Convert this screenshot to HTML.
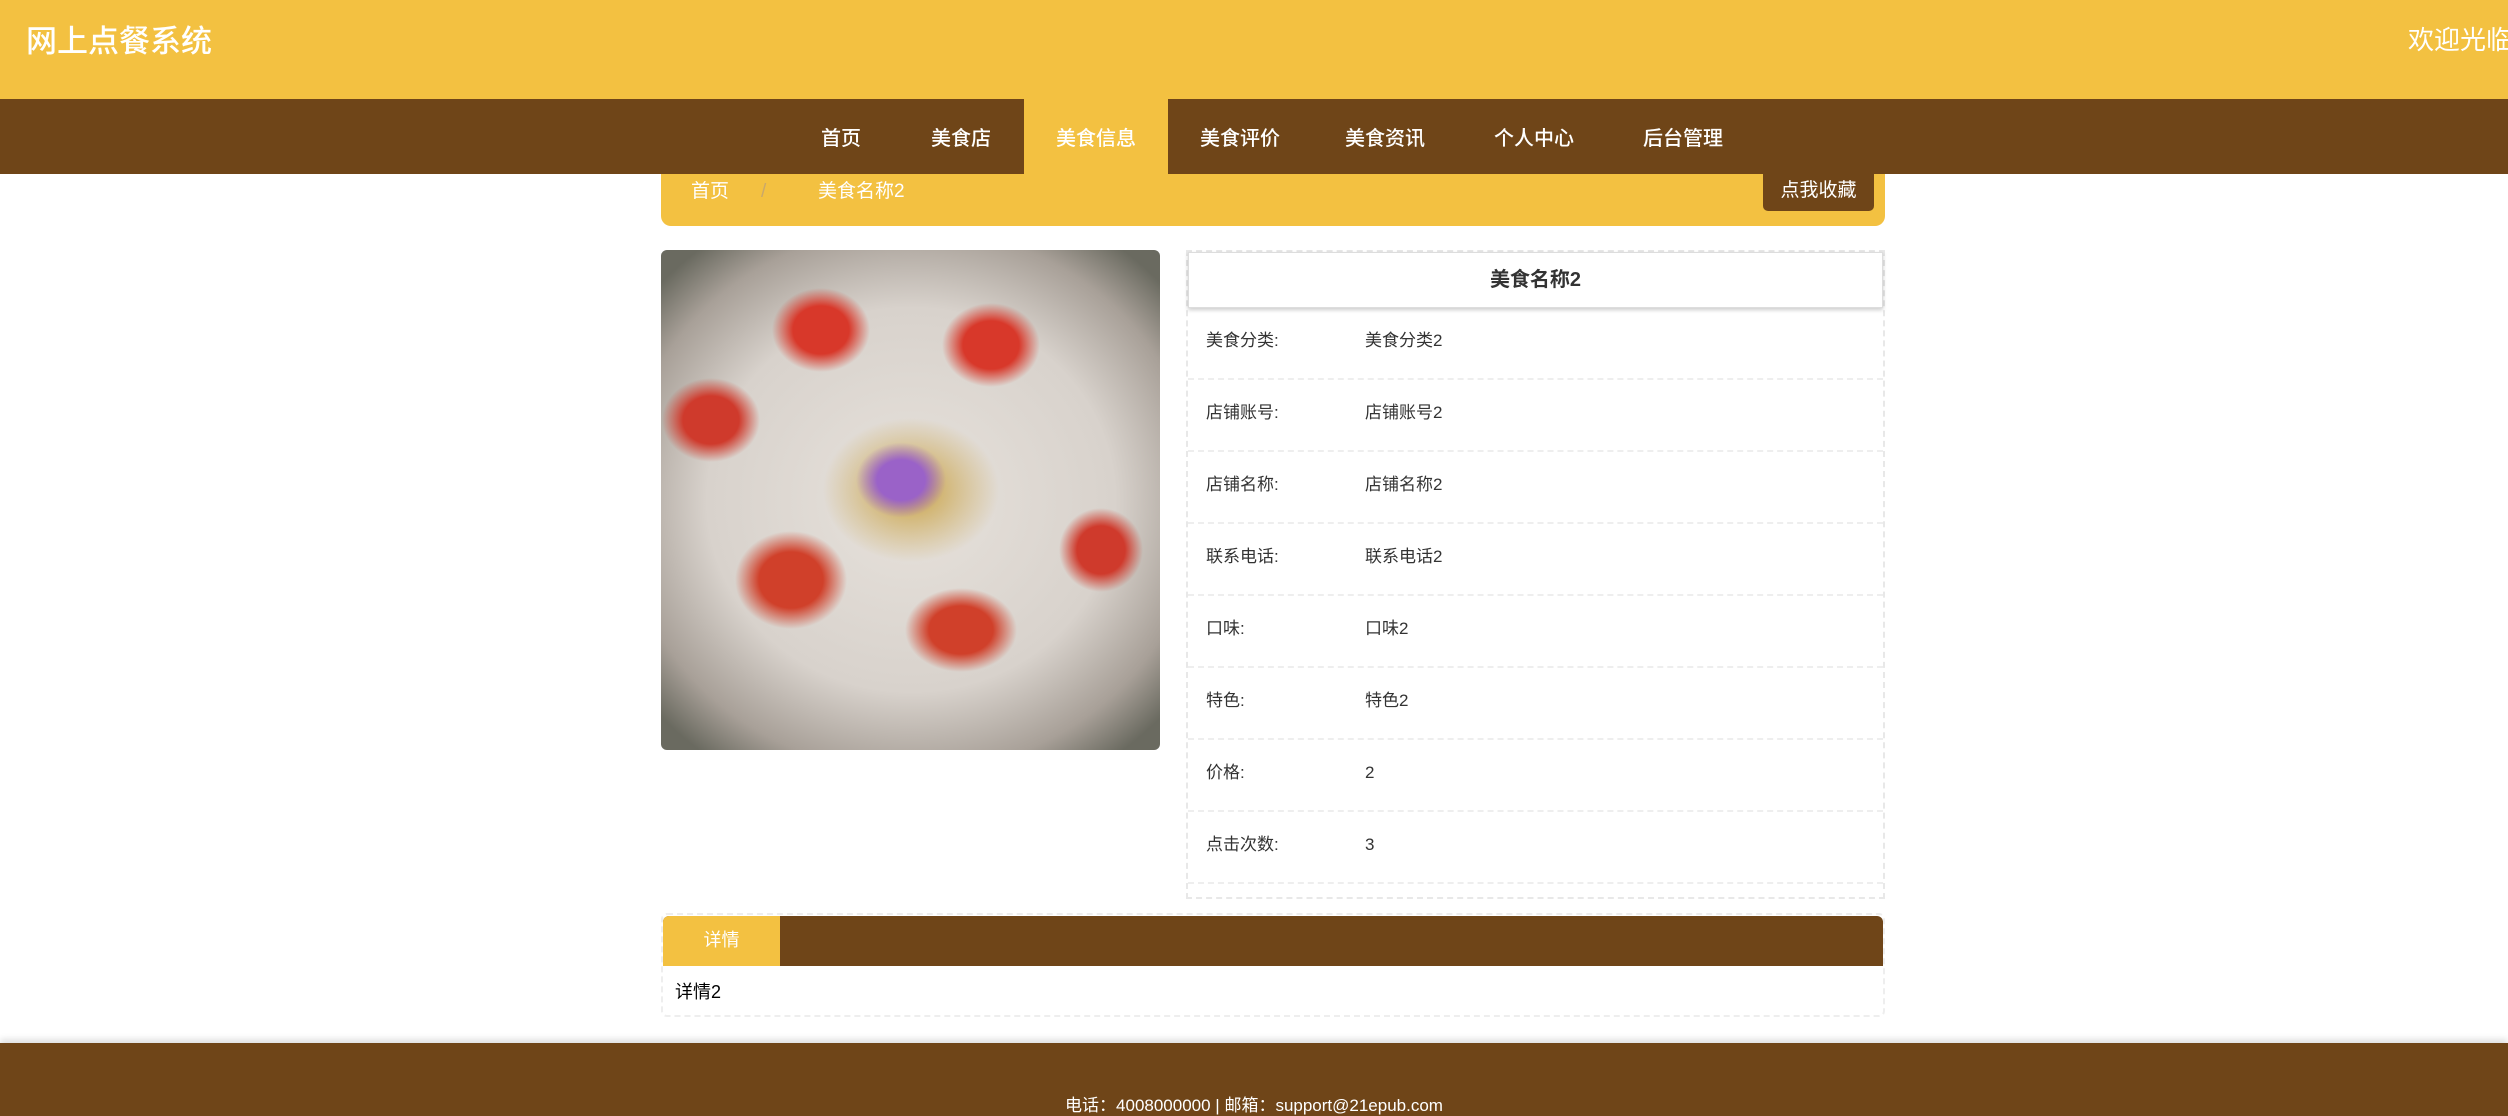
<!DOCTYPE html>
<html><head><meta charset="utf-8"><style>
*{margin:0;padding:0;box-sizing:border-box}
body{width:2508px;height:1116px;overflow:hidden;background:#fff;font-family:"Liberation Sans","Noto Sans CJK SC",sans-serif;position:relative}
.abs{position:absolute}
#hd{left:0;top:0;width:2508px;height:99px;background:#F3C141}
#hd .t{left:26px;top:16px;font-size:31px;color:#fff;font-weight:500}
#hd .w{left:2408px;top:20px;font-size:26px;color:#fff;white-space:nowrap}
#nav{left:0;top:99px;width:2508px;height:75px;background:#6F4518}
#nav span{position:absolute;top:23px;font-size:20px;color:#fff;white-space:nowrap;font-weight:500}
#act{left:1024px;top:99px;width:144px;height:75px;background:#F3C141}
#bc{left:661px;top:174px;width:1224px;height:52px;background:#F3C141;border-radius:0 0 10px 10px}
#bc span{position:absolute;top:5px;font-size:19px;color:#fff;line-height:26px}
#btn{left:1102px;top:0;width:111px;height:37px;background:#6F4518;border-radius:0 0 5px 5px;color:#fff;font-size:19px;line-height:33px;text-align:center}
#img{left:661px;top:250px;width:499px;height:500px;border-radius:6px;overflow:hidden;
background:
radial-gradient(ellipse 70px 60px at 160px 80px,#d8382a 0,#d8382a 40%,transparent 70%),
radial-gradient(ellipse 70px 60px at 330px 95px,#d8382a 0,#d8382a 40%,transparent 70%),
radial-gradient(ellipse 70px 60px at 50px 170px,#cf3a2c 0,#cf3a2c 40%,transparent 70%),
radial-gradient(ellipse 80px 70px at 130px 330px,#d0402a 0,#d0402a 40%,transparent 70%),
radial-gradient(ellipse 80px 60px at 300px 380px,#d0402a 0,#d0402a 40%,transparent 70%),
radial-gradient(ellipse 60px 60px at 440px 300px,#cf3a2c 0,#cf3a2c 40%,transparent 70%),
radial-gradient(ellipse 60px 50px at 240px 230px,#9a62c8 0,#9a62c8 40%,transparent 75%),
radial-gradient(ellipse 110px 90px at 250px 240px,#c8a040 0,transparent 80%),
radial-gradient(ellipse 340px 320px at 250px 250px,#e7e2dc 0,#d8d2cc 60%,#a8a098 85%,#6a6a60 100%)}
#info{left:1186px;top:250px;width:699px;height:649px;border:2px dashed #e8e8e8}
#tt{left:0;top:0;width:695px;height:56px;background:#fff;border:1px solid #ddd;box-shadow:0 2px 4px rgba(0,0,0,.2);text-align:center;line-height:54px;font-size:20px;font-weight:bold;color:#333}
.row{position:absolute;left:0;width:695px;height:72px;border-bottom:2px dashed #eee;font-size:17px;color:#333}
.row b{position:absolute;left:18px;top:21px;font-weight:normal;line-height:24px}
.row i{position:absolute;left:177px;top:21px;font-style:normal;line-height:24px}
#tab{left:661px;top:913px;width:1224px;height:104px;border:2px dashed #eee;border-radius:6px}
#th{left:0;top:1px;width:1220px;height:50px;background:#6F4518;border-radius:6px 6px 0 0;overflow:hidden}
#ta{left:0;top:0;width:117px;height:50px;background:#F3C141;color:#fff;font-size:18px;text-align:center;line-height:48px}
#tc{left:12px;top:63px;font-size:18px;color:#000}
#ft{left:0;top:1043px;width:2508px;height:73px;background:#6F4518;box-shadow:0 -4px 6px rgba(0,0,0,.12)}
#ft div{position:absolute;left:0;width:2508px;top:48px;text-align:center;color:#fff;font-size:17px}
</style></head><body>
<div id="hd" class="abs"><div class="abs t">网上点餐系统</div><div class="abs w">欢迎光临</div></div>
<div id="nav" class="abs">
<span style="left:821px">首页</span>
<span style="left:931px">美食店</span>
<span style="left:1200px">美食评价</span>
<span style="left:1345px">美食资讯</span>
<span style="left:1494px">个人中心</span>
<span style="left:1643px">后台管理</span>
</div>
<div id="act" class="abs"><span style="position:absolute;left:32px;top:23px;font-size:20px;color:#fff;font-weight:500">美食信息</span></div>
<div id="bc" class="abs"><span style="left:30px">首页</span><span style="left:100px;color:#c9a86a">/</span><span style="left:157px">美食名称2</span><div id="btn" class="abs">点我收藏</div></div>
<div id="img" class="abs"></div>
<div id="info" class="abs">
<div id="tt" class="abs">美食名称2</div>
<div class="row" style="top:56px"><b>美食分类:</b><i>美食分类2</i></div>
<div class="row" style="top:128px"><b>店铺账号:</b><i>店铺账号2</i></div>
<div class="row" style="top:200px"><b>店铺名称:</b><i>店铺名称2</i></div>
<div class="row" style="top:272px"><b>联系电话:</b><i>联系电话2</i></div>
<div class="row" style="top:344px"><b>口味:</b><i>口味2</i></div>
<div class="row" style="top:416px"><b>特色:</b><i>特色2</i></div>
<div class="row" style="top:488px"><b>价格:</b><i>2</i></div>
<div class="row" style="top:560px"><b>点击次数:</b><i>3</i></div>
</div>
<div id="tab" class="abs"><div id="th" class="abs"><div id="ta" class="abs">详情</div></div><div id="tc" class="abs">详情2</div></div>
<div id="ft" class="abs"><div>电话：4008000000 | 邮箱：support@21epub.com</div></div>
</body></html>
